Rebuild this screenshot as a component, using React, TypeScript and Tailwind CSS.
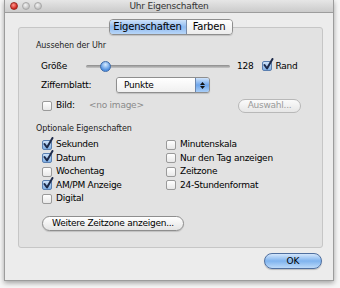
import React from "react";

const font = { fontFamily: '"Lucida Grande", "DejaVu Sans", sans-serif' };

function Check({ checked }: { checked?: boolean }) {
  return (
    <span className="relative inline-block w-[10px] h-[10px] shrink-0">
      <span
        className={
          "absolute inset-0 rounded-[2px] border " +
          (checked
            ? "border-[#5a7fb0] bg-gradient-to-b from-[#cfe2f7] to-[#7fb0e6]"
            : "border-[#9a9a9a] bg-gradient-to-b from-[#ffffff] to-[#e8e8e8]")
        }
      />
      {checked && (
        <svg className="absolute left-[1px] top-[-3px]" width="11" height="12" viewBox="0 0 11 12">
          <path d="M1.5 7 L4 10.5 L9.5 1" fill="none" stroke="#1d2a4a" strokeWidth="2" strokeLinecap="round" strokeLinejoin="round" />
        </svg>
      )}
    </span>
  );
}

function CheckRow({ label, checked }: { label: string; checked?: boolean }) {
  return (
    <div className="flex items-center gap-[4px] h-[13.5px]">
      <Check checked={checked} />
      <span className="text-[9px] tracking-[-0.25px] text-black leading-none whitespace-nowrap">{label}</span>
    </div>
  );
}

export default function App() {
  return (
    <div className="w-[340px] h-[288px] bg-[#f6f6f6] overflow-hidden" style={font}>
      <div className="ml-[4px] w-[330px] h-[281px] bg-[#ececec] border-x border-b border-[#9c9c9c] shadow-[0_2px_5px_rgba(0,0,0,0.35)] flex flex-col">
        {/* title bar */}
        <div className="h-[13px] bg-gradient-to-b from-[#e6e6e6] to-[#cbcbcb] border-b border-[#9d9d9d] flex items-center relative shrink-0">
          <div className="flex items-center gap-[4px] ml-[5px]">
            <span className="w-[8px] h-[8px] rounded-full bg-[radial-gradient(circle_at_40%_35%,#ff9a8f,#d0211a_70%)] border border-[#9a2a22]" />
            <span className="w-[8px] h-[8px] rounded-full bg-[radial-gradient(circle_at_40%_35%,#f4f4f4,#bdbdbd_75%)] border border-[#a8a8a8]" />
            <span className="w-[8px] h-[8px] rounded-full bg-[radial-gradient(circle_at_40%_35%,#f4f4f4,#bdbdbd_75%)] border border-[#a8a8a8]" />
          </div>
          <span className="absolute left-0 right-0 text-center text-[9px] tracking-[-0.2px] text-[#333] leading-none">Uhr Eigenschaften</span>
        </div>

        {/* group box */}
        <div className="ml-[13px] mt-[14px] w-[305px] h-[221px] bg-[#e2e2e2] border border-[#c6c6c6] rounded-[3px] flex flex-col px-[17px]">
          {/* tab */}
          <div className="self-center -mt-[9px] h-[16px] w-[124px] flex rounded-[4px] border border-[#8e8e8e] overflow-hidden shadow-[0_1px_1px_rgba(0,0,0,0.15)]">
            <div className="w-[77px] flex items-center justify-center bg-gradient-to-b from-[#cfe3fa] via-[#8fbaf0] to-[#b8d6f8] border-r border-[#7a8ca8] text-[10px] tracking-[-0.2px] text-black leading-none">
              Eigenschaften
            </div>
            <div className="flex-1 flex items-center justify-center bg-gradient-to-b from-[#ffffff] to-[#ececec] text-[10px] tracking-[-0.2px] text-black leading-none">
              Farben
            </div>
          </div>

          <div className="mt-[5px] text-[8px] tracking-[-0.1px] text-[#222] leading-[12px]">Aussehen der Uhr</div>

          {/* Größe */}
          <div className="mt-[7px] h-[14px] flex items-center pl-[5px]">
            <span className="text-[9px] tracking-[-0.25px] w-[45px] leading-none">Größe</span>
            <div className="relative w-[144px] h-[14px] flex items-center">
              <div className="w-full h-[3px] rounded-full bg-gradient-to-b from-[#8a8a8a] to-[#c8c8c8]" />
              <div className="absolute left-[14px] top-[1.5px] w-[11px] h-[11px] rounded-full border border-[#3d6aa8] bg-[radial-gradient(circle_at_50%_30%,#d6ebff,#4f8fe0_70%)]" />
            </div>
            <span className="ml-[7px] text-[9px] tracking-[-0.25px] leading-none">128</span>
            <span className="ml-[9px] flex items-center gap-[3px]">
              <Check checked />
              <span className="text-[9px] tracking-[-0.25px] leading-none">Rand</span>
            </span>
          </div>

          {/* Ziffernblatt */}
          <div className="mt-[4px] h-[16px] flex items-center pl-[5px]">
            <span className="text-[9px] tracking-[-0.25px] w-[75px] leading-none">Ziffernblatt:</span>
            <div className="w-[94px] h-[16px] flex rounded-[3px] border border-[#8e8e8e] overflow-hidden shadow-[0_1px_1px_rgba(0,0,0,0.15)]">
              <div className="flex-1 bg-gradient-to-b from-white to-[#f0f0f0] flex items-center pl-[7px] text-[9px] tracking-[-0.25px] leading-none">Punkte</div>
              <div className="w-[14px] bg-gradient-to-b from-[#cfe3fa] via-[#6ea6ec] to-[#a9cef7] border-l border-[#6b86ad] flex flex-col items-center justify-center gap-[1px]">
                <svg width="5" height="3" viewBox="0 0 5 3"><path d="M0 3 L2.5 0 L5 3 Z" fill="#111" /></svg>
                <svg width="5" height="3" viewBox="0 0 5 3"><path d="M0 0 L2.5 3 L5 0 Z" fill="#111" /></svg>
              </div>
            </div>
          </div>

          {/* Bild */}
          <div className="mt-[5px] h-[15px] flex items-center pl-[6px]">
            <Check />
            <span className="ml-[4px] text-[9px] tracking-[-0.25px] w-[33px] leading-none">Bild:</span>
            <span className="text-[9px] tracking-[-0.25px] text-[#8a8a8a] leading-none">&lt;no image&gt;</span>
            <div className="ml-auto mr-[4px] w-[63px] h-[14px] rounded-full border border-[#b8b8b8] bg-gradient-to-b from-[#fbfbfb] to-[#e6e6e6] flex items-center justify-center text-[9px] tracking-[-0.25px] text-[#9a9a9a] leading-none">
              Auswahl...
            </div>
          </div>

          <div className="mt-[10px] text-[8px] tracking-[-0.1px] text-[#222] leading-[12px]">Optionale Eigenschaften</div>

          <div className="mt-[3px] pl-[6px] flex">
            <div className="w-[124px] flex flex-col">
              <CheckRow label="Sekunden" checked />
              <CheckRow label="Datum" checked />
              <CheckRow label="Wochentag" />
              <CheckRow label="AM/PM Anzeige" checked />
              <CheckRow label="Digital" />
            </div>
            <div className="flex flex-col">
              <CheckRow label="Minutenskala" />
              <CheckRow label="Nur den Tag anzeigen" />
              <CheckRow label="Zeitzone" />
              <CheckRow label="24-Stundenformat" />
            </div>
          </div>

          <div className="mt-[10px] ml-[6px] w-[142px] h-[15px] rounded-full border border-[#8e8e8e] bg-gradient-to-b from-white to-[#e4e4e4] shadow-[0_1px_1px_rgba(0,0,0,0.15)] flex items-center justify-center text-[9px] tracking-[-0.25px] whitespace-nowrap leading-none">
            Weitere Zeitzone anzeigen...
          </div>
        </div>

        {/* OK */}
        <div className="flex justify-end mt-[5px] mr-[11px]">
          <div className="w-[58px] h-[16px] rounded-full border border-[#4f6f9f] bg-gradient-to-b from-[#d3e6fb] via-[#7fb3ee] to-[#bcdaf9] shadow-[0_1px_1px_rgba(0,0,0,0.2)] flex items-center justify-center text-[9px] leading-none">
            OK
          </div>
        </div>
      </div>
    </div>
  );
}
